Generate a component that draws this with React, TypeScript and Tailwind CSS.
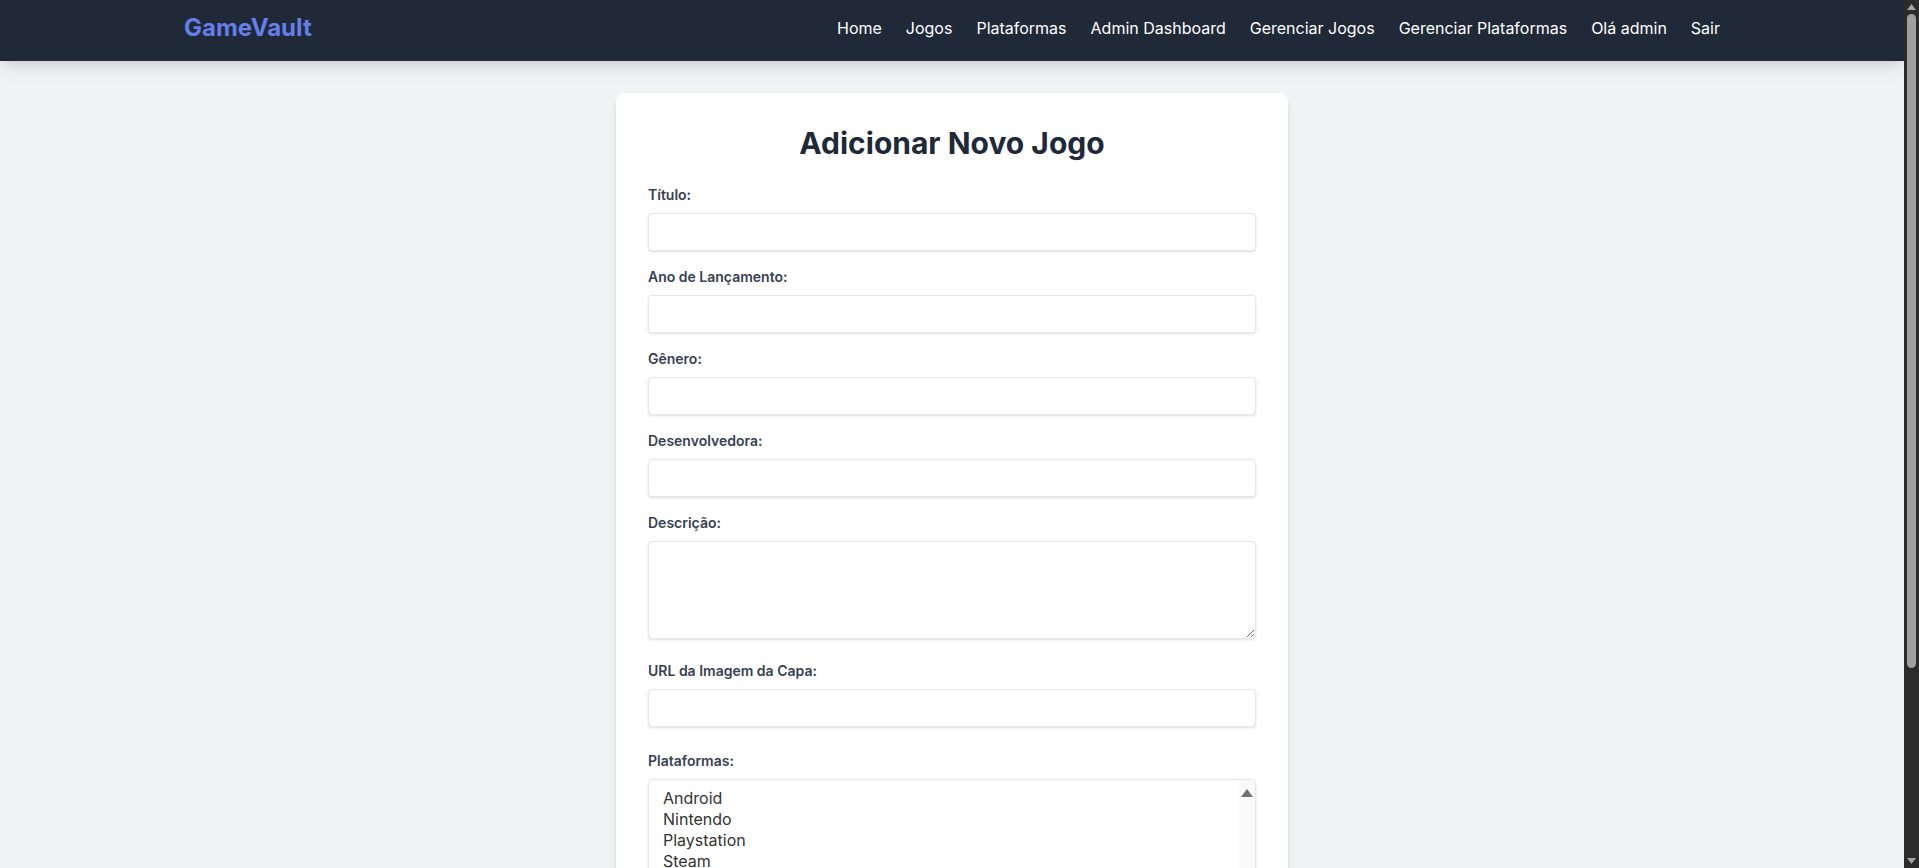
import React from "react";

const navItems = [
  "Home",
  "Jogos",
  "Plataformas",
  "Admin Dashboard",
  "Gerenciar Jogos",
  "Gerenciar Plataformas",
  "Olá admin",
  "Sair",
];

const inputCls =
  "shadow-sm appearance-none border border-gray-200 rounded w-full py-2 px-3 text-sm text-gray-700 leading-5 bg-white focus:outline-none";

function Field({ label, children, last }: { label: string; children: React.ReactNode; last?: boolean }) {
  return (
    <div className={last ? "mb-6" : "mb-4"}>
      <label className="block text-gray-700 text-sm font-semibold leading-5 mb-2">{label}</label>
      {children}
    </div>
  );
}

function Tri({ down, color, w = 9, h = 6 }: { down?: boolean; color: string; w?: number; h?: number }) {
  return (
    <svg width={w} height={h} viewBox={`0 0 ${w} ${h}`} className="block">
      {down ? (
        <path d={`M0 0 H${w} L${w / 2} ${h} Z`} fill={color} />
      ) : (
        <path d={`M${w / 2} 0 L${w} ${h} H0 Z`} fill={color} />
      )}
    </svg>
  );
}

export default function App() {
  const platforms = ["Android", "Nintendo", "Playstation", "Steam", "Xbox", "iOS", "PC"];
  return (
    <div
      className="flex h-screen overflow-hidden bg-[#f0f2f5]"
      style={{ fontFamily: "Inter, 'Noto Sans', 'Liberation Sans', sans-serif" }}
    >
      <div className="flex-1 min-w-0 overflow-hidden">
        <header className="bg-[#1f2937] shadow-lg h-[61px] relative z-10">
          <div className="max-w-[1536px] mx-auto h-full flex items-center justify-between pb-[5px]">
            <a className="text-2xl font-bold text-[#667eea]">GameVault</a>
            <nav className="flex items-center gap-6 text-white text-base">
              {navItems.map((n) => (
                <a key={n}>{n}</a>
              ))}
            </nav>
          </div>
        </header>
        <main className="pt-8 pb-8">
          <div className="max-w-2xl mx-auto bg-white rounded-lg shadow-md p-8">
            <h1 className="text-3xl font-bold text-center text-gray-800 mb-6">Adicionar Novo Jogo</h1>
            <form>
              <Field label="Título:">
                <input type="text" className={inputCls} />
              </Field>
              <Field label="Ano de Lançamento:">
                <input type="number" className={inputCls} />
              </Field>
              <Field label="Gênero:">
                <input type="text" className={inputCls} />
              </Field>
              <Field label="Desenvolvedora:">
                <input type="text" className={inputCls} />
              </Field>
              <Field label="Descrição:">
                <textarea rows={4} className={inputCls} />
              </Field>
              <Field label="URL da Imagem da Capa:" last>
                <input type="text" className={inputCls} />
              </Field>
              <Field label="Plataformas:" last>
                <div className="shadow-sm border border-gray-200 rounded w-full h-32 bg-white flex overflow-hidden">
                  <div className="flex-1 py-2 px-3 overflow-hidden">
                    {platforms.map((p) => (
                      <div key={p} className="px-[2px] text-base leading-[21px] text-[#333]">
                        {p}
                      </div>
                    ))}
                  </div>
                  <div className="w-[16px] bg-[#fafafa] flex flex-col items-center pt-[9px]">
                    <Tri color="#707070" w={12} h={8} />
                  </div>
                </div>
              </Field>
              <div className="flex items-center justify-between">
                <button type="button" className="bg-[#667eea] text-white font-bold py-2 px-4 rounded">
                  Adicionar Jogo
                </button>
                <a className="font-bold text-sm text-[#667eea]">Cancelar</a>
              </div>
            </form>
          </div>
        </main>
      </div>
      <div className="w-[15px] shrink-0 bg-[#2b2b2b] flex flex-col items-center">
        <div className="h-[14px] flex items-center">
          <Tri color="#a3a3a3" />
        </div>
        <div className="w-[9px] h-[654px] rounded-[5px] bg-[#9f9f9f]" />
        <div className="flex-1" />
        <div className="h-[14px] flex items-center">
          <Tri down color="#a3a3a3" />
        </div>
      </div>
    </div>
  );
}
